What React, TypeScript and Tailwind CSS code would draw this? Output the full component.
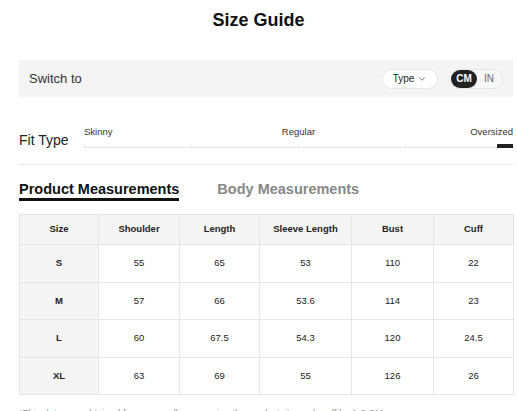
import { ChevronDown } from "lucide-react";

const columns = ["Size", "Shoulder", "Length", "Sleeve Length", "Bust", "Cuff"];
const widths = ["w-[79px]", "w-[81px]", "w-[80px]", "w-[92px]", "w-[82px]", "w-[80px]"];

const rows = [
  ["S", "55", "65", "53", "110", "22"],
  ["M", "57", "66", "53.6", "114", "23"],
  ["L", "60", "67.5", "54.3", "120", "24.5"],
  ["XL", "63", "69", "55", "126", "26"],
];

const FitScale = () => {
  return (
    <div className="w-[429px]">
      <div className="grid grid-cols-3 text-[9.5px] leading-[12px] text-[#333]">
        <span className="text-left">Skinny</span>
        <span className="text-center">Regular</span>
        <span className="text-right">Oversized</span>
      </div>
      <div className="relative mt-[6px] h-[4px] border-b border-[#e4e4e4]">
        <span className="absolute left-0 top-[1px] h-[3px] w-px bg-[#ddd]" />
        <span className="absolute left-[106px] top-[1px] h-[3px] w-px bg-[#ddd]" />
        <span className="absolute left-[214px] top-[1px] h-[3px] w-px bg-[#ddd]" />
        <span className="absolute left-[321px] top-[1px] h-[3px] w-px bg-[#ddd]" />
        <span className="absolute right-0 top-0 h-[4px] w-[16px] bg-[#222]" />
      </div>
    </div>
  );
};

export default function App() {
  return (
    <div className="w-[517px] bg-white font-['Liberation_Sans',Arial,sans-serif] text-[#222]">
      <h1 className="pt-[9px] text-center text-[18px] font-bold leading-[22px] text-[#111]">
        Size Guide
      </h1>

      <div className="ml-[19px] w-[494px]">
        <div className="mt-[29px] flex h-[37px] items-center justify-between bg-[#f4f4f4] px-[10px]">
          <span className="text-[13px] text-[#333]">Switch to</span>
          <div className="flex items-center gap-[11px]">
            <button className="flex h-[20px] w-[56px] items-center justify-center gap-[3px] rounded-full border border-[#e6e6e6] bg-white text-[10px] text-[#222]">
              Type
              <ChevronDown size={10} strokeWidth={1.5} />
            </button>
            <div className="flex h-[20px] w-[54px] items-center rounded-full border border-[#e6e6e6] bg-[#f7f7f7] p-px">
              <span className="flex h-[18px] w-[26px] items-center justify-center rounded-full bg-[#222] text-[10px] font-bold text-white">
                CM
              </span>
              <span className="flex-1 text-center text-[10px] text-[#666]">IN</span>
            </div>
          </div>
        </div>

        <div className="mt-[29px] flex items-end border-b border-[#e6e6e6] pb-[16px]">
          <span className="w-[65px] text-[14px] font-medium leading-[16px] text-[#222]">
            Fit Type
          </span>
          <FitScale />
        </div>

        <div className="mt-[16px] flex items-start gap-[38px]">
          <span className="border-b-[3px] border-[#111] text-[14.5px] font-bold leading-[17px] text-[#111]">
            Product Measurements
          </span>
          <span className="text-[14.5px] font-bold leading-[17px] text-[#888]">
            Body Measurements
          </span>
        </div>

        <table className="mt-[13px] w-[494px] table-fixed border-collapse text-[9.5px] text-[#222]">
          <thead>
            <tr>
              {columns.map((c, i) => (
                <th
                  key={c}
                  className={`${widths[i]} h-[30px] border border-[#e5e5e5] bg-[#f5f5f5] text-center font-bold`}
                >
                  {c}
                </th>
              ))}
            </tr>
          </thead>
          <tbody>
            {rows.map((r) => (
              <tr key={r[0]}>
                {r.map((v, i) => (
                  <td
                    key={i}
                    className={
                      i === 0
                        ? "h-[37.5px] border border-[#e5e5e5] bg-[#f5f5f5] text-center font-bold"
                        : "h-[37.5px] border border-[#e5e5e5] text-center"
                    }
                  >
                    {v}
                  </td>
                ))}
              </tr>
            ))}
          </tbody>
        </table>

        <p className="mt-[12px] text-[9.5px] leading-[12px] text-[#999]">
          *This data was obtained from manually measuring the product, it may be off by 1-2 CM.
        </p>
      </div>
    </div>
  );
}
